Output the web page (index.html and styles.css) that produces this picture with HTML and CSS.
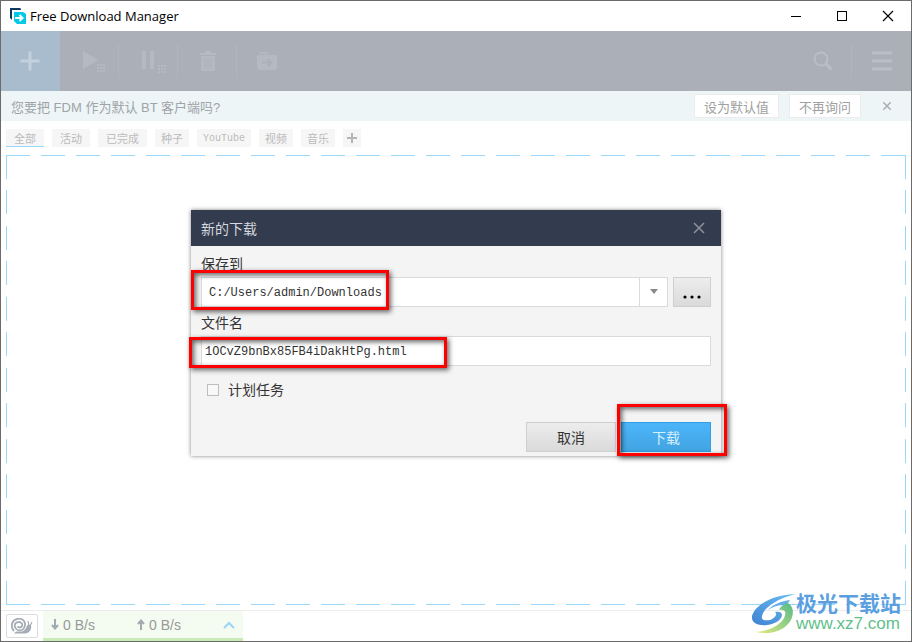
FILE: index.html
```html
<!DOCTYPE html>
<html lang="zh-CN">
<head>
    <meta charset="UTF-8">
    <meta name="viewport" content="width=device-width, initial-scale=1.0">
    <title>Free Download Manager</title>
    <link rel="stylesheet" href="styles.css">
</head>
<body>
    <div class="window">
        <header class="titlebar">
            <svg class="app-icon" width="16" height="16" viewBox="0 0 16 16">
                <path d="M0 0h10l1 1v1H2v10L0 10z" fill="#0b3c5d"/>
                <path d="M4 4h9l3 2v10H7l-3-3z" fill="#00c8e6"/>
                <path d="M5 10h7M9.500 7l3 3-3 3" fill="none" stroke="#fff" stroke-width="2"/>
            </svg>
            <h1>Free Download Manager</h1>
            <button class="win-btn" aria-label="最小化">
                <svg width="12" height="12"><path d="M1 6.500h10" stroke="#000"/></svg>
            </button>
            <button class="win-btn" aria-label="最大化">
                <svg width="12" height="12"><rect x="1.500" y="1.500" width="9" height="9" fill="none" stroke="#000"/></svg>
            </button>
            <button class="win-btn" aria-label="关闭">
                <svg width="12" height="12"><path d="M1 1l10 10M11 1L1 11" stroke="#000" stroke-width="1.200"/></svg>
            </button>
        </header>

        <div class="content">
            <nav class="toolbar">
                <button class="tool add" aria-label="新建下载">
                    <svg width="20" height="20"><path d="M10 0.500v19M0.500 10h19" stroke="#c3d0dd" stroke-width="3"/></svg>
                </button>
                <button class="tool shifted" aria-label="开始">
                    <svg width="24" height="24" fill="#b5b9c2">
                        <path d="M0 2l15 9L0 20z"/>
                        <path d="M14 15h2v2h-2zM17 15h2v2h-2zM20 15h2v2h-2zM14 18h2v2h-2zM17 18h2v2h-2zM20 18h2v2h-2zM14 21h2v2h-2zM17 21h2v2h-2zM20 21h2v2h-2z"/>
                    </svg>
                </button>
                <button class="tool shifted" aria-label="暂停">
                    <svg width="24" height="24" fill="#b5b9c2">
                        <path d="M0 2h4v18H0zM8 2h4v18H8z"/>
                        <path d="M16 16h2v2h-2zM19 16h2v2h-2zM22 16h2v2h-2zM16 19h2v2h-2zM19 19h2v2h-2zM22 19h2v2h-2zM16 22h2v2h-2zM19 22h2v2h-2zM22 22h2v2h-2z"/>
                    </svg>
                </button>
                <button class="tool" aria-label="删除">
                    <svg width="16" height="20">
                        <path d="M0 2h5V0h6v2h5v2H0zM1 5h14v14l-1 1H2l-1-1z" fill="#b5b9c2"/>
                        <path d="M5 7v11M8 7v11M11 7v11" stroke="#abafb8" stroke-width="1"/>
                    </svg>
                </button>
                <button class="tool" aria-label="移动">
                    <svg width="20" height="18">
                        <path d="M3 0h8l1 2H2zM1 3h18l1 1v12l-2 2H2l-2-2V4z" fill="#b5b9c2"/>
                        <path d="M5 10.500h9M10.500 7l4 3.500-4 3.500" fill="none" stroke="#abafb8" stroke-width="2"/>
                    </svg>
                </button>
                <span class="spacer"></span>
                <button class="tool" aria-label="搜索">
                    <svg width="20" height="20" fill="none" stroke="#bbbec6">
                        <circle cx="8" cy="8" r="6.500" stroke-width="2"/>
                        <path d="M12.500 12.500L18.500 18.500" stroke-width="3"/>
                    </svg>
                </button>
                <button class="tool" aria-label="菜单">
                    <svg width="20" height="20"><path d="M0 2h20M0 10h20M0 18h20" stroke="#bbbec6" stroke-width="3"/></svg>
                </button>
            </nav>

            <div class="banner">
                <p>您要把 FDM 作为默认 BT 客户端吗?</p>
                <button class="banner-btn">设为默认值</button>
                <button class="banner-btn">不再询问</button>
                <button class="banner-close" aria-label="关闭">
                    <svg width="8" height="8"><path d="M0 0l8 8M8 0L0 8" stroke="#a9adb2" stroke-width="1.500"/></svg>
                </button>
            </div>

            <div class="tabs">
                <button class="tab active">全部</button>
                <button class="tab">活动</button>
                <button class="tab">已完成</button>
                <button class="tab custom">种子</button>
                <button class="tab custom latin">YouTube</button>
                <button class="tab custom">视频</button>
                <button class="tab custom">音乐</button>
                <button class="tab plus" aria-label="添加标签">
                    <svg width="10" height="10"><path d="M5 0v10M0 5h10" stroke="#b5b5b5" stroke-width="2"/></svg>
                </button>
            </div>

            <main class="drop-zone"></main>

            <footer class="statusbar">
                <button class="snail" aria-label="限速">
                    <svg width="22" height="16" viewBox="0 0 22 16" fill="none" stroke="#a6acb5">
                        <path d="M3 13C0 10 0 5 3 2.500 6 0 11 0 13 3c2 3 1 7-2 9-3 1-6 0-7-3-1-3 1-5 4-5 2 0 4 2 3 4-1 2-4 2-4 0" stroke-width="1.800"/>
                        <path d="M3 15.500l2-2h6c4-1 4-5 6-7l3 1c1 4-2 8-6 8z" fill="#a6acb5" stroke="none"/>
                        <path d="M18 8l-1-5M19 8l2-4" stroke-width="1.200"/>
                    </svg>
                </button>
                <div class="speed">
                    <span class="rate">
                        <svg width="8" height="11"><path d="M4 0v9M1 6l3 3.500L7 6" fill="none" stroke="#a3a9b0" stroke-width="2"/></svg>0 B/s
                    </span>
                    <span class="rate">
                        <svg width="8" height="11"><path d="M4 11V2M1 5l3-3.500L7 5" fill="none" stroke="#a3a9b0" stroke-width="2"/></svg>0 B/s
                    </span>
                    <button class="expand" aria-label="展开">
                        <svg width="12" height="8"><path d="M1 7l5-5 5 5" fill="none" stroke="#9ad5f8" stroke-width="2"/></svg>
                    </button>
                </div>
            </footer>

            <div class="overlay">
                <form class="dialog">
                    <div class="dialog-head">
                        <h2>新的下载</h2>
                        <button type="button" class="dialog-close" aria-label="关闭">
                            <svg width="12" height="12"><path d="M1 1l10 10M11 1L1 11" stroke="#8d929c" stroke-width="1.500"/></svg>
                        </button>
                    </div>
                    <div class="dialog-body">
                        <label for="save-to">保存到</label>
                        <div class="path-row">
                            <div class="combo">
                                <input type="text" id="save-to" value="C:/Users/admin/Downloads">
                                <button type="button" class="combo-arrow" aria-label="选择文件夹">
                                    <svg width="8" height="5"><path d="M0 0h8L4 5z" fill="#8a8a8a"/></svg>
                                </button>
                            </div>
                            <button type="button" class="btn browse" aria-label="浏览">
                                <svg width="18" height="4"><circle cx="2" cy="2" r="1.600"/><circle cx="9" cy="2" r="1.600"/><circle cx="16" cy="2" r="1.600"/></svg>
                            </button>
                        </div>
                        <label for="file-name">文件名</label>
                        <input type="text" id="file-name" class="file-name" value="1OCvZ9bnBx85FB4iDakHtPg.html">
                        <label class="schedule"><input type="checkbox">计划任务</label>
                        <div class="actions">
                            <button type="button" class="btn">取消</button>
                            <button type="button" class="btn primary">下载</button>
                        </div>
                    </div>
                    <span class="mark mark-path"></span>
                    <span class="mark mark-file"></span>
                    <span class="mark mark-download"></span>
                </form>
            </div>
        </div>

        <div class="watermark">
            <svg width="44" height="40" viewBox="0 0 44 40">
                <defs>
                    <linearGradient id="blue" x1="0" y1="1" x2="1" y2="0">
                        <stop offset="0" stop-color="#3f82d2"/>
                        <stop offset="1" stop-color="#6cc0f2"/>
                    </linearGradient>
                    <linearGradient id="green" x1="0" y1="1" x2="1" y2="0">
                        <stop offset="0" stop-color="#e3ea7c"/>
                        <stop offset="1" stop-color="#55b98a"/>
                    </linearGradient>
                </defs>
                <path d="M44 0C27 0 4 8 0 22c-1 7 6 10 15 9 9-1 15-6 15-10 0-3-3-4-7-3 3 2 0 6-5 8-5 1-9 0-8-4C12 13 27 4 44 0z" fill="url(#blue)"/>
                <path d="M38 6c-8 1-17 4-22 10 6-4 13-6 18-4z" fill="#64b0e8"/>
                <path d="M36 9c7 4 6 15 0 21-7 8-20 11-32 8 12-1 24-6 28-14 3-6 1-9-5-8 1-3 5-6 9-7z" fill="url(#green)"/>
            </svg>
            <div class="watermark-text">
                <strong>极光下载站</strong>
                <span>www.xz7.com</span>
            </div>
        </div>
    </div>
</body>
</html>
```
FILE: styles.css
```css
* {
    box-sizing: border-box;
}
body {
    margin: 0;
    font-family: "Liberation Sans", "Noto Sans CJK SC", sans-serif;
    font-size: 14px;
    color: #333;
    background-color: #fff;
}
button {
    display: flex;
    align-items: center;
    justify-content: center;
    padding: 0;
    border: none;
    background: none;
    font-family: inherit;
    cursor: pointer;
}
h1, h2, p {
    margin: 0;
    font-weight: normal;
}
.window {
    position: relative;
    display: flex;
    flex-direction: column;
    min-height: 100vh;
    border: 1px solid #6b6b6b;
}

/* title bar */
.titlebar {
    display: flex;
    height: 30px;
    align-items: center;
    padding-left: 9px;
}
.app-icon {
    margin-right: 4px;
}
.titlebar h1 {
    flex: 1;
    font-family: "Open Sans", "Noto Sans", sans-serif;
    font-size: 13px;
    color: #000;
}
.win-btn {
    width: 46px;
    height: 30px;
}

.content {
    position: relative;
    display: flex;
    flex: 1;
    flex-direction: column;
}

/* toolbar */
.toolbar {
    display: flex;
    height: 60px;
    background-color: #abafb8;
}
.tool {
    width: 59px;
    background: linear-gradient(#b1b5be, #b1b5be) no-repeat right center / 1px 34px;
}
.tool.add {
    padding-right: 2px;
    background: #a9bccd;
}
.tool.shifted {
    padding-left: 11px;
}
.tool:last-child, .tool:nth-child(5) {
    background: none;
}
.spacer {
    flex: 1;
}

/* default client question */
.banner {
    display: flex;
    align-items: center;
    height: 30px;
    padding: 0 20px 0 10px;
    background-color: #edf5f7;
    color: #a0a4a8;
}
.banner p {
    flex: 1;
    font-size: 13px;
}
.banner-btn {
    height: 24px;
    margin-right: 10px;
    padding: 0 9px;
    border: 1px solid #ececec;
    background-color: #fff;
    font-size: 13px;
    color: #a0a0a0;
}
.banner-close {
    width: 8px;
    height: 24px;
    margin-left: 12px;
}

/* tags */
.tabs {
    display: flex;
    gap: 8px;
    padding: 8px 5px;
}
.tab {
    height: 18px;
    padding: 0 8px;
    background-color: #f6f6f6;
    font-size: 11px;
    color: #bbb;
}
.tab.active {
    border-bottom: 1px solid #99d6fb;
}
.tab.custom {
    padding: 0 6px;
}
.tab.latin {
    font-family: "Liberation Mono", monospace;
    font-size: 10px;
}
.tab.plus {
    padding: 0 4px;
}

.drop-zone {
    --across: #9ad8fc 0 24px, transparent 24px 35px;
    --down: #9ad8fc 0 24px, transparent 24px calc((100% - 24px) / 12);
    flex: 1;
    margin: 0 5px 5px;
    background-image:
        repeating-linear-gradient(to right, var(--across)),
        repeating-linear-gradient(to right, var(--across)),
        repeating-linear-gradient(to bottom, var(--down)),
        repeating-linear-gradient(to bottom, var(--down));
    background-position: left top, left bottom, left top, right top;
    background-size: 100% 1px, 100% 1px, 1px 100%, 1px 100%;
    background-repeat: no-repeat;
}

/* status bar */
.statusbar {
    display: flex;
    height: 31px;
    border-top: 1px solid #ececec;
}
.snail {
    width: 32px;
    height: 24px;
    margin: 3px 5px;
    border: 1px solid #dcdcdc;
    border-radius: 2px;
}
.speed {
    display: flex;
    align-items: center;
    width: 200px;
    padding: 0 8px;
    border-bottom: 3px solid #c9ecb6;
    background-color: #f4fbf1;
    color: #999;
}
.rate {
    display: flex;
    align-items: center;
    gap: 4px;
    width: 87px;
}
.expand {
    width: 12px;
}

/* new download dialog */
.overlay {
    position: absolute;
    inset: 0;
    display: flex;
    align-items: center;
    justify-content: center;
    padding-bottom: 7px;
}
.dialog {
    position: relative;
    width: 530px;
    background-color: #f4f4f4;
    box-shadow: 0 0 4px rgba(0, 0, 0, 0.5);
}
.dialog-head {
    display: flex;
    align-items: center;
    justify-content: space-between;
    height: 36px;
    padding: 0 16px 0 10px;
    background-color: #333b4e;
}
.dialog-head h2 {
    font-size: 14px;
    color: #d5d8de;
}
.dialog-body {
    display: flex;
    flex-direction: column;
    padding: 6px 10px 4px;
}
.dialog-body label {
    line-height: 24px;
    margin-bottom: 1px;
}
.dialog-body input[type="text"] {
    min-width: 0;
    font-family: "Liberation Mono", monospace;
    font-size: 12px;
    color: #333;
    background-color: #fff;
}
.path-row {
    display: flex;
    gap: 5px;
    height: 30px;
    margin-bottom: 4px;
}
.combo {
    display: flex;
    flex: 1;
    border: 1px solid #dadada;
}
.combo input {
    flex: 1;
    border: none;
    padding: 2px 7px 0;
}
.combo-arrow {
    width: 28px;
    border-left: 1px solid #dadada;
    background-color: #fff;
}
.btn {
    width: 90px;
    height: 30px;
    border: 1px solid #cfcfcf;
    background: linear-gradient(#ededed, #dadada);
    font-size: 14px;
    color: #333;
}
.browse {
    width: 38px;
    padding-top: 10px;
}
.file-name {
    height: 30px;
    padding: 2px 3px 0;
    border: 1px solid #dadada;
}
.dialog-body .schedule {
    display: flex;
    align-items: center;
    gap: 9px;
    margin: 12px 6px 20px;
}
.schedule input {
    appearance: none;
    width: 12px;
    height: 12px;
    margin: 0;
    border: 1px solid #bdbdbd;
    background-color: #f8f8f8;
}
.actions {
    display: flex;
    justify-content: flex-end;
    gap: 5px;
}
.btn.primary {
    border-color: #2f9fe6;
    background: linear-gradient(#4cb5fa, #42a4e2);
    color: #d8effd;
}

/* red frames over the dialog */
.mark {
    position: absolute;
    border: 3px solid #fe0000;
    box-shadow: 2px 2px 5px rgba(0, 0, 0, 0.6), inset 2px 2px 5px rgba(0, 0, 0, 0.6);
    pointer-events: none;
}
.mark-path {
    left: 0;
    top: 60px;
    width: 198px;
    height: 40px;
}
.mark-file {
    left: -2px;
    top: 127px;
    width: 258px;
    height: 31px;
}
.mark-download {
    left: 426px;
    top: 194px;
    width: 110px;
    height: 52px;
}

.watermark {
    position: absolute;
    right: 10px;
    bottom: 7px;
    display: flex;
    align-items: center;
}
.watermark-text {
    display: flex;
    flex-direction: column;
    line-height: 21px;
}
.watermark-text strong {
    font-size: 21px;
    color: #5b9fdf;
}
.watermark-text span {
    font-size: 17px;
    line-height: 20px;
    color: #5fbf8a;
}
```
